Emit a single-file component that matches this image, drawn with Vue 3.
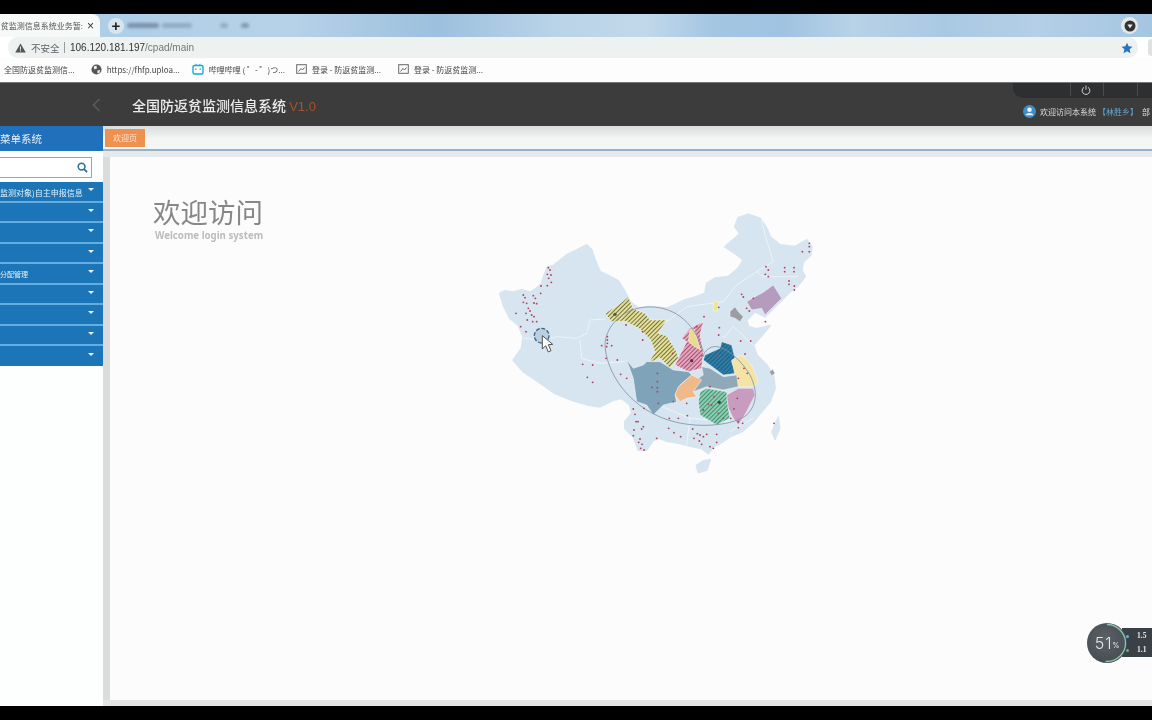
<script setup>
const menu = [
  { label: '监测对象)自主申报信息' },
  { label: '' }, { label: '' }, { label: '' },
  { label: '分配管理', small: true },
  { label: '' }, { label: '' }, { label: '' }, { label: '' }
]
const bookmarks = [
  { icon: '', text: '全国防返贫监测信...' },
  { icon: 'globe', text: 'https://fhfp.uploa...' },
  { icon: 'tv', text: '哔哩哔哩 ( ゜- ゜)つ...' },
  { icon: 'pic', text: '登录 - 防返贫监测...' },
  { icon: 'pic', text: '登录 - 防返贫监测...' }
]
const outline = [[30,265],[45,258],[70,262],[95,255],[120,262],[140,250],[155,235],[160,218],[172,186],[190,182],[205,170],[230,150],[262,135],[290,120],[305,135],[315,165],[330,200],[355,212],[385,228],[402,255],[420,290],[445,310],[480,305],[530,310],[555,300],[585,285],[620,275],[645,265],[650,235],[675,220],[715,215],[745,190],[760,165],[735,145],[705,125],[735,100],[750,85],[735,65],[745,38],[775,28],[810,40],[830,70],[840,95],[870,120],[915,125],[950,105],[965,125],[962,150],[940,170],[935,195],[945,215],[925,240],[895,265],[875,285],[845,315],[825,335],[795,320],[770,345],[775,365],[800,372],[840,362],[812,395],[790,420],[800,450],[830,480],[850,510],[855,550],[840,590],[815,620],[790,650],[755,680],[720,695],[690,715],[670,725],[655,745],[635,730],[610,725],[570,715],[530,708],[510,700],[490,705],[470,735],[445,735],[430,695],[405,670],[405,650],[425,625],[420,600],[395,580],[370,585],[330,605],[295,600],[245,585],[195,565],[145,530],[100,500],[70,465],[95,430],[100,395],[85,360],[60,340],[40,300]]
const china = 'M' + outline.map(p => p.join(',')).join(' L') + ' Z'
const provinces = [
  { d: 'M345,325 L385,300 L415,275 L430,312 L465,325 L480,345 L530,345 L505,385 L530,392 L560,440 L565,460 L540,490 L510,458 L475,475 L495,440 L482,405 L450,372 L405,348 L365,350 Z', fill: 'url(#hatchYellow)' },
  { d: 'M575,400 L600,370 L640,350 L630,390 L640,440 L635,490 L595,500 L555,480 L575,440 L590,410 Z', fill: 'url(#hatchPink)' },
  { d: 'M645,450 L690,430 L695,410 L725,420 L735,460 L725,470 L740,505 L700,510 L660,480 L640,465 Z', fill: 'url(#hatchBlue)' },
  { d: 'M725,465 L755,450 L785,480 L805,530 L790,545 L745,545 L735,510 Z', fill: '#f3e4a6' },
  { d: 'M635,485 L660,490 L700,515 L740,510 L745,545 L700,555 L650,545 L610,560 L625,520 L640,510 Z', fill: '#8fa9b8' },
  { d: 'M410,465 L430,490 L460,480 L470,470 L510,470 L550,495 L595,500 L605,510 L570,540 L555,570 L560,590 L520,600 L490,630 L470,600 L440,590 L430,520 Z', fill: '#7fa3b8' },
  { d: 'M605,510 L635,525 L610,560 L620,575 L590,580 L570,590 L555,570 L565,545 Z', fill: '#f0b98a' },
  { d: 'M630,560 L650,550 L710,560 L715,610 L720,640 L680,660 L630,630 L625,590 Z', fill: 'url(#hatchGreen)' },
  { d: 'M745,550 L790,550 L795,570 L770,620 L745,660 L730,640 L715,610 L710,570 Z', fill: '#c79cbe' },
  { d: 'M770,290 L795,275 L820,262 L850,240 L875,280 L850,305 L825,330 L815,310 L785,315 Z', fill: '#b59bbd' },
  { d: 'M720,320 L735,305 L745,320 L760,335 L750,350 L735,340 L720,335 Z', fill: '#9a9ea2' },
  { d: 'M838,500 L848,493 L855,505 L845,512 Z', fill: '#9a9ea2' },
  { d: 'M670,290 L685,290 L682,318 L670,318 Z', fill: '#eee58f' },
  { d: 'M600,375 L612,372 L625,415 L632,435 L615,425 L595,410 Z', fill: '#e9dc8c' }
]
const dots = [
  [175,188],[180,195],[172,208],[183,210],[176,220],[184,232],[172,242],[153,243],[152,265],[100,270],[105,278],[130,272],[136,280],
  [100,292],[110,295],[132,294],[140,296],[115,310],[120,318],[108,325],[78,325],[125,330],[132,335],[112,345],[128,350],[140,350],[92,365],[108,380],
  [352,395],[352,405],[352,415],[335,422],[350,425],[365,422],[348,460],[382,465],[278,478],[308,480],[292,517],[308,532],[392,508],[410,520],[408,360],[458,380],[458,405],
  [430,612],[462,610],[435,628],[438,650],[444,650],[460,665],[432,675],[455,672],[430,692],[450,702],[446,712],[456,718],[452,730],[462,735],
  [502,505],[502,530],[486,547],[502,548],[502,560],[505,595],[548,445],[590,595],[550,590],[538,640],[565,640],[592,632],[536,670],[552,683],[572,695],[500,700],
  [608,672],[622,686],[630,690],[612,700],[628,708],[635,718],[640,695],[650,688],[680,688],[660,725],[670,730],[680,712],[745,668],[745,650],[758,655],
  [660,545],[672,575],[655,598],[665,600],[640,615],[688,592],[700,640],[685,625],[722,640],[732,612],[742,580],[745,520],[762,490],[772,505],[752,408],[782,408],[765,447],
  [642,335],[686,307],[688,368],[686,390],[620,365],[604,467],[686,452],[705,458],[636,452],
  [755,268],[760,276],[770,310],[778,318],[790,280],[826,350],[828,185],[835,195],[826,208],[835,215],[884,188],[884,200],[912,188],[912,200],[897,228],[897,238],[913,243],[913,255],[937,140],[958,115],[958,125],[958,140],[852,655]
]
</script>

<template>
  <div class="screen">
    <div class="letterbox top"></div>

    <div class="tabstrip">
      <div class="tab">
        <span class="tab-title">贫监测信息系统业务暂:</span>
        <span class="tab-close">×</span>
      </div>
      <span class="new-tab">+</span>
      <span class="smudge s1"></span>
      <span class="smudge s2"></span>
      <span class="smudge s3"></span>
      <span class="smudge s4"></span>
      <span class="avatar">
        <svg width="12" height="12" viewBox="0 0 12 12"><circle cx="6" cy="6" r="5.5" fill="#333" /><path d="M3.4 4.4 H8.6 L6 8.2 Z" fill="#eee" /></svg>
      </span>
    </div>

    <div class="toolbar">
      <div class="address">
        <svg class="warn" width="11" height="10" viewBox="0 0 11 10"><path d="M5.5 0.5 L10.8 9.5 L0.2 9.5 Z" fill="#555" /><rect x="5" y="3.5" width="1" height="3.2" fill="#eee" /><rect x="5" y="7.4" width="1" height="1" fill="#eee" /></svg>
        <span class="insecure">不安全</span>
        <span class="addr-sep"></span>
        <span class="url">106.120.181.197<span class="url-path">/cpad/main</span></span>
        <svg class="star" width="12" height="12" viewBox="0 0 24 24"><path d="M12 1.5 L15.2 8.6 L23 9.4 L17.2 14.6 L18.9 22.3 L12 18.3 L5.1 22.3 L6.8 14.6 L1 9.4 L8.8 8.6 Z" fill="#2a72c0" /></svg>
      </div>
      <span class="profile"></span>
    </div>

    <div class="bookmarks">
      <div v-for="(b, i) in bookmarks" :key="i" class="bookmark">
        <svg v-if="b.icon === 'globe'" width="11" height="11" viewBox="0 0 12 12"><circle cx="6" cy="6" r="5.5" fill="#555" /><path d="M3 2.5 L6 2 L6.5 5 L3.5 6 Z M7 7 L10 6.5 L9 10 L7 10 Z" fill="#eee" /></svg>
        <svg v-else-if="b.icon === 'tv'" width="12" height="12" viewBox="0 0 12 12"><path d="M3.5 0.8 L5 2.5 M8.5 0.8 L7 2.5" stroke="#19a8cf" stroke-width="1" /><rect x="1" y="2.5" width="10" height="8.5" rx="1.5" fill="none" stroke="#19a8cf" stroke-width="1.4" /><path d="M3.8 5.5 V7 M8.2 5.5 V7" stroke="#19a8cf" stroke-width="1.2" /></svg>
        <svg v-else-if="b.icon === 'pic'" width="11" height="10" viewBox="0 0 11 10"><rect x="0.7" y="0.7" width="9.6" height="8.6" fill="none" stroke="#666" /><path d="M2.5 7.5 L5 4.5 L6.5 6 L8.5 3.5" fill="none" stroke="#666" /></svg>
        <span>{{ b.text }}</span>
      </div>
    </div>

    <header class="app-header">
      <svg class="back" width="9" height="14" viewBox="0 0 9 14"><path d="M7.5 1 L1.5 7 L7.5 13" fill="none" stroke="#5b5b5b" stroke-width="1.6" /></svg>
      <h1 class="app-title">全国防返贫监测信息系统 <span class="version">V1.0</span></h1>
      <div class="header-right">
        <div class="actions">
          <span class="action"></span>
          <span class="action power">
            <svg width="10" height="10" viewBox="0 0 12 12"><path d="M3.6 2.8 A4.6 4.6 0 1 0 8.4 2.8 M6 0.6 V5.6" fill="none" stroke="#ddd" stroke-width="1.1" /></svg>
          </span>
          <span class="action"></span>
          <span class="action last"></span>
        </div>
        <div class="user">
          <svg width="13" height="13" viewBox="0 0 12 12"><circle cx="6" cy="6" r="6" fill="#3d8fc8" /><circle cx="6" cy="4.4" r="2.1" fill="#e8f2f8" /><path d="M2.4 9.4 C3 6.8 9 6.8 9.6 9.4 Z" fill="#e8f2f8" /></svg>
          <span class="welcome">欢迎访问本系统</span>
          <span class="town">【林胜乡】</span>
          <span class="dept">部</span>
        </div>
      </div>
    </header>

    <div class="body">
      <aside class="sidebar">
        <div class="side-title"><span>菜单系统</span></div>
        <div class="search">
          <div class="search-box">
            <svg width="11" height="11" viewBox="0 0 12 12"><circle cx="5" cy="5" r="3.7" fill="none" stroke="#2c6f9e" stroke-width="1.7" /><path d="M7.8 7.8 L11 11" stroke="#2c6f9e" stroke-width="2" /></svg>
          </div>
        </div>
        <ul class="menu">
          <li v-for="(m, i) in menu" :key="i" class="menu-item">
            <span class="menu-label" :class="{ small: m.small }">{{ m.label }}</span>
            <i class="caret"></i>
          </li>
        </ul>
      </aside>

      <main class="main">
        <div class="tabbar"><span class="page-tab">欢迎页</span></div>
        <div class="gutter"></div>
        <div class="content">
          <div class="welcome-block">
            <div class="big">欢迎访问</div>
            <div class="small-en">Welcome login system</div>
          </div>
          <svg class="map" width="330" height="275" viewBox="0 0 990 825">
            <defs>
              <pattern id="hatchYellow" width="9" height="9" patternUnits="userSpaceOnUse" patternTransform="rotate(45)"><rect width="9" height="9" fill="#e8df90" /><rect width="3" height="9" fill="#6d7350" /></pattern>
              <pattern id="hatchPink" width="9" height="9" patternUnits="userSpaceOnUse" patternTransform="rotate(45)"><rect width="9" height="9" fill="#e2a6bd" /><rect width="3" height="9" fill="#a8506f" /></pattern>
              <pattern id="hatchBlue" width="9" height="9" patternUnits="userSpaceOnUse" patternTransform="rotate(45)"><rect width="9" height="9" fill="#2f7ea6" /><rect width="3" height="9" fill="#1c5f85" /></pattern>
              <pattern id="hatchGreen" width="9" height="9" patternUnits="userSpaceOnUse" patternTransform="rotate(45)"><rect width="9" height="9" fill="#8fcdb3" /><rect width="3" height="9" fill="#3f8f72" /></pattern>
            </defs>
            <path :d="china" fill="#d6e5f0" stroke="#d6e5f0" stroke-width="6" stroke-linejoin="round" />
            <path d="M620,782 L640,768 L660,765 L650,795 L625,802 Z" fill="#d6e5f0" stroke="#d6e5f0" stroke-width="6" stroke-linejoin="round" />
            <path d="M865,635 L845,680 L855,705 L870,670 Z" fill="#d6e5f0" stroke="#d6e5f0" stroke-width="3" stroke-linejoin="round" />
            <g fill="none" stroke="#f0f6fa" stroke-width="2.5">
              <path d="M100,400 L155,405 L200,395 L260,400 L290,385 L300,345 L345,342" />
              <path d="M270,405 L275,460 L330,475 L405,470" />
              <path d="M530,350 L590,305 L700,290 L740,240 L800,200 L850,170 L825,90 L815,45" />
              <path d="M800,200 L820,215 L890,215 L925,215" />
              <path d="M700,400 L730,365 L790,420 M505,600 L600,640 L720,650 M600,640 L590,720 M790,640 L720,680" />
            </g>
            <path v-for="(p, i) in provinces" :key="i" :d="p.d" :fill="p.fill" stroke="#f4f8fa" stroke-width="1.5" stroke-linejoin="round" />
            <g fill="none" stroke="#7f93a3" stroke-width="2.5">
              <path d="M345,415 C350,360 400,310 470,306 C540,302 610,340 640,440" />
              <path d="M345,415 C345,500 420,620 560,652 C640,670 730,660 770,630 C800,600 805,560 780,510 C750,460 700,420 670,425 C650,430 640,445 640,455" />
            </g>
            <circle v-for="(d, i) in dots" :key="'d' + i" :cx="d[0]" :cy="d[1]" r="2.8" fill="#b2435c" />
            <circle cx="375" cy="328" r="5" fill="#4d5a3a" />
            <circle cx="605" cy="467" r="5" fill="#6b2a45" />
            <circle cx="688" cy="592" r="5" fill="#22553f" />
            <circle cx="155" cy="392" r="22" fill="#bccfe0" stroke="#3e6184" stroke-width="4" stroke-dasharray="12 5" />
            <path d="M157,392 V432 L167,422 L175,441 L183,437 L175,419 L188,418 Z" fill="#fff" stroke="#333" stroke-width="2.5" stroke-linejoin="round" />
          </svg>
          <div class="widget">
            <div class="net">
              <div class="net-row"><i class="dot up"></i>1.5</div>
              <div class="net-row"><i class="dot down"></i>1.1</div>
            </div>
            <div class="gauge">
              <svg class="arc" width="40" height="40" viewBox="0 0 40 40"><circle cx="20" cy="20" r="18.5" fill="none" stroke="#8fc4ae" stroke-width="1.3" stroke-dasharray="59.3 120" transform="rotate(-90 20 20)" /></svg>
              <span class="num">51</span><span class="pct">%</span>
            </div>
          </div>
        </div>
        <div class="foot"></div>
      </main>
    </div>

    <div class="letterbox bottom"></div>
  </div>
</template>

<style scoped>
.screen {
  width: 1152px;
  height: 720px;
  overflow: hidden;
  display: flex;
  flex-direction: column;
  background: #000;
  font-family: "Noto Sans CJK SC", "Noto Sans", sans-serif;
  filter: blur(0.35px);
}
.letterbox { background: #000; flex: none; }
.letterbox.top { height: 14px; }
.letterbox.bottom { height: 14px; }

.tabstrip {
  height: 23px;
  flex: none;
  display: flex;
  align-items: center;
  position: relative;
  background: linear-gradient(90deg, #a9cbe6 0, #b7d2e8 25%, #9cc0de 38%, #b9d3e8 48%, #c2d8ea 56%, #a3c6e2 62%, #9fc3e1 68%, #b8d2e7 74%, #a9c9e3 82%, #b4cfe6 90%, #a4c6e2 100%);
}
.tab {
  width: 100px;
  height: 23px;
  flex: none;
  background: #f7f8f8;
  border-radius: 0 8px 0 0;
  display: flex;
  align-items: center;
  justify-content: flex-end;
  overflow: hidden;
  font-size: 8px;
  color: #555;
  white-space: nowrap;
  padding-right: 6px;
  box-sizing: border-box;
}
.tab-title { margin-right: 4px; }
.tab-close { font-size: 12px; color: #333; line-height: 1; font-family: "Liberation Sans", sans-serif; }
.new-tab {
  width: 16px;
  height: 16px;
  margin-left: 8px;
  border-radius: 50%;
  background: #d8e5ef;
  color: #222;
  font: 700 15px/16px "Liberation Sans", sans-serif;
  text-align: center;
  flex: none;
}
.smudge { height: 5px; border-radius: 3px; background: #46586c; filter: blur(1.5px); opacity: .5; flex: none; }
.s1 { width: 32px; margin-left: 3px; }
.s2 { width: 30px; margin-left: 3px; opacity: .3; }
.s3 { width: 8px; margin-left: 28px; opacity: .3; }
.s4 { width: 8px; margin-left: 13px; opacity: .45; }
.avatar {
  width: 17px;
  height: 17px;
  border-radius: 50%;
  background: #e6e9eb;
  display: flex;
  align-items: center;
  justify-content: center;
  margin-left: auto;
  margin-right: 14px;
}

.toolbar {
  height: 21px;
  flex: none;
  background: #fff;
  padding-left: 8px;
  display: flex;
  align-items: stretch;
}
.address {
  flex: 1;
  background: #edf1f0;
  border-radius: 10px;
  display: flex;
  align-items: center;
  padding-left: 7px;
  font-size: 9.5px;
  color: #5f6368;
}
.warn { margin-right: 5px; }
.insecure { width: 28px; font-size: 9.5px; white-space: nowrap; }
.addr-sep { width: 1px; height: 11px; background: #999; margin: 0 5px 0 5px; }
.url { font: 10px "Liberation Sans", sans-serif; color: #333; }
.url-path { color: #777; }
.star { margin-left: auto; margin-right: 5px; }
.profile {
  width: 4px;
  height: 17px;
  flex: none;
  align-self: center;
  margin-left: 10px;
  border-radius: 9px 0 0 9px;
  background: #dfe2e3;
}

.bookmarks {
  height: 22px;
  padding-bottom: 2px;
  flex: none;
  background: #fdfdfd;
  border-bottom: 1px solid #777;
  display: flex;
  align-items: center;
  padding-left: 4px;
  box-sizing: content-box;
  font-size: 8px;
  color: #444;
}
.bookmark { display: flex; align-items: center; gap: 5px; white-space: nowrap; margin-right: 16px; }
.bookmark:nth-child(2) { margin-right: 12px; }
.bookmark:nth-child(3) { margin-right: 11px; }
.bookmark:nth-child(4) { margin-right: 17px; }

.app-header {
  height: 43px;
  flex: none;
  background: #3c3c3c;
  display: flex;
  align-items: center;
  position: relative;
}
.back { margin-left: 92px; }
.app-title {
  margin: 0 0 0 31px;
  font-size: 14px;
  font-weight: 500;
  color: #ececec;
  white-space: nowrap;
}
.version { color: #a9522a; font: 400 13px "Liberation Sans", sans-serif; }
.header-right {
  margin-left: auto;
  width: 139px;
  height: 43px;
  flex: none;
  display: flex;
  flex-direction: column;
  overflow: hidden;
}
.actions {
  height: 15px;
  background: #2e2f30;
  border-radius: 0 0 0 10px;
  display: flex;
  padding-left: 57px;
}
.action {
  width: 33px;
  border-right: 1px solid #4a4b4c;
  height: 13px;
  flex: none;
  display: flex;
  align-items: center;
  justify-content: center;
}
.action:first-child { width: 0; border-right: 1px solid #4a4b4c; }
.action.power { width: 33px; padding-right: 3px; box-sizing: border-box; }
.action.last { width: 33px; }
.user {
  margin-top: 7px;
  display: flex;
  align-items: center;
  padding-left: 10px;
  font-size: 8px;
  color: #ddd;
  white-space: nowrap;
}
.welcome { margin-left: 4px; }
.town { color: #63a8d4; margin-left: 2px; }
.dept { margin-left: 4px; }

.body { flex: 1; min-height: 0; display: flex; }
.sidebar {
  width: 103px;
  flex: none;
  background: #fdfefe;
  overflow: hidden;
}
.side-title {
  height: 25px;
  background: #2070bb;
  color: #e8f0f6;
  font-size: 10.5px;
  line-height: 25px;
  white-space: nowrap;
}
.search { padding: 6px 11px 4px 0; }
.search-box {
  height: 21px;
  border: 1px solid #9aa6ab;
  border-left: 0;
  box-sizing: border-box;
  background: #fff;
  display: flex;
  align-items: center;
  justify-content: flex-end;
  padding-right: 3px;
}
.menu { list-style: none; margin: 0; padding: 0; }
.menu-item {
  height: 18.5px;
  background: #1b75b6;
  border-bottom: 2px solid #62ade2;
  display: flex;
  align-items: center;
  justify-content: space-between;
  padding-right: 9px;
  font-size: 8px;
  color: #e6f1f8;
  white-space: nowrap;
  overflow: hidden;
  box-sizing: content-box;
}
.menu-item:last-child { border-bottom: 0; height: 20px; }
.menu-label { padding-top: 2px; }
.menu-label.small { font-size: 7px; }
.caret {
  width: 0;
  height: 0;
  border-left: 3px solid transparent;
  border-right: 3px solid transparent;
  border-top: 3px solid #e8f3fa;
  flex: none;
  margin-bottom: 3px;
}

.main { flex: 1; min-width: 0; display: flex; flex-direction: column; background: #dbdddd; padding-left: 1px; }
.tabbar {
  height: 25px;
  flex: none;
  background: linear-gradient(#d9dcdc, #f4f5f5 55%, #f4f5f5);
  border-bottom: 2px solid #94b2c8;
  box-sizing: border-box;
  display: flex;
  align-items: flex-end;
  padding-bottom: 2px;
  margin-left: -1px;
}
.page-tab {
  width: 40px;
  height: 18px;
  margin-left: 2px;
  background: #ee9150;
  color: #f9e6d8;
  font-size: 8px;
  line-height: 18px;
  text-align: center;
}
.gutter { height: 6px; flex: none; background: #e6e9e9; margin-left: -1px; }
.content {
  flex: 1;
  min-height: 0;
  margin-left: 6px;
  background: #fcfcfc;
  display: flex;
  position: relative;
  padding: 35px 0 0 43px;
}
.welcome-block { width: 337px; flex: none; }
.big { font-size: 27.5px; line-height: 38px; color: #878787; font-weight: 400; white-space: nowrap; }
.small-en { font: 700 9.7px/14px "Noto Sans", sans-serif; color: #bcbcbc; margin: -1px 0 0 2px; white-space: nowrap; }
.map { margin-top: 13px; flex: none; }
.foot { height: 6px; flex: none; background: #e3e6e5; margin-left: -1px; }

.widget { position: absolute; right: 0; bottom: 37px; width: 65px; height: 40px; }
.net {
  position: absolute;
  right: 0;
  top: 5px;
  width: 30px;
  height: 29px;
  background: #3a4146;
  font: 700 7.5px/14px "Liberation Serif", serif;
  color: #e8e8e8;
  padding: 1px 0 0 3px;
  box-sizing: border-box;
  overflow: hidden;
  white-space: nowrap;
}
.net-row { display: flex; align-items: center; gap: 8px; }
.dot { width: 3px; height: 3px; border-radius: 50%; flex: none; margin-left: 1px; }
.dot.up { background: #6fb2cf; }
.dot.down { background: #6fae83; }
.gauge {
  position: absolute;
  left: 0;
  top: 0;
  width: 40px;
  height: 40px;
  border-radius: 50%;
  background: radial-gradient(circle at 45% 40%, #5a6268, #3f474c);
  color: #e4e8ea;
  display: flex;
  align-items: center;
  justify-content: center;
}
.arc { position: absolute; left: 0; top: 0; }
.num { font: 300 16px/1 "Inter", sans-serif; letter-spacing: 1px; }
.pct { font: 400 7px/1 "Inter", sans-serif; margin-top: 5px; }
</style>

<style>
html, body { margin: 0; background: #000; }
</style>
